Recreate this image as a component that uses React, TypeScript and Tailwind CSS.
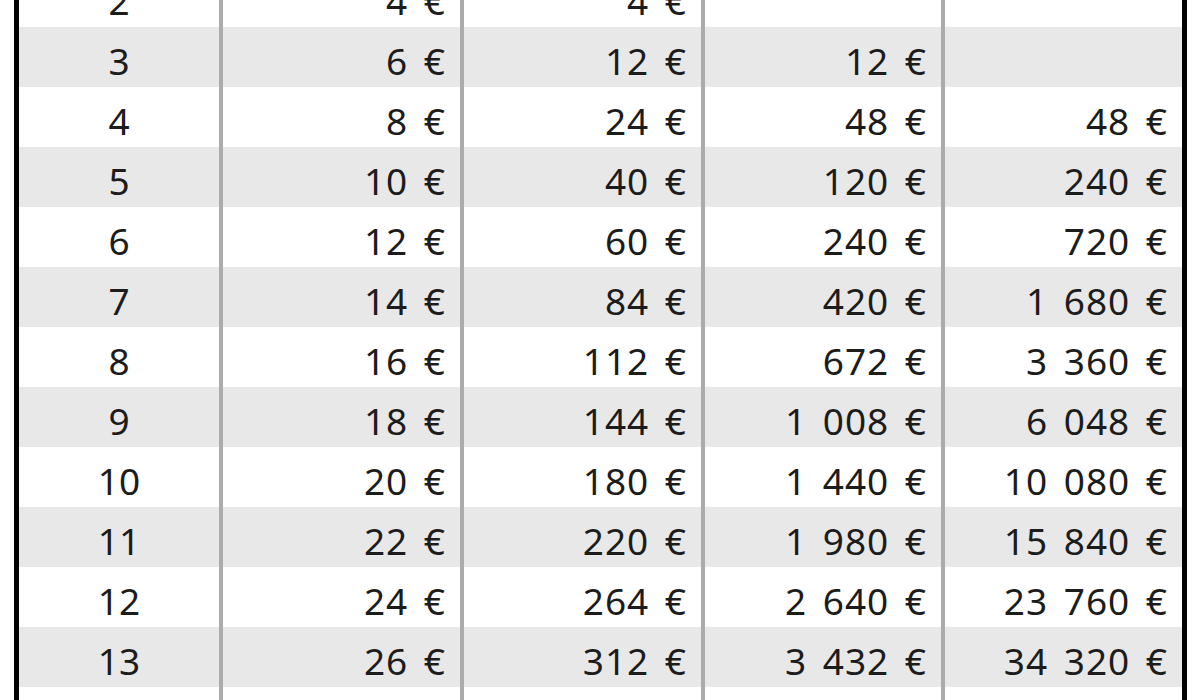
const cols = [
  (n: number) => 2 * n,
  (n: number) => 2 * n * (n - 1),
  (n: number) => 2 * n * (n - 1) * (n - 2),
  (n: number) => 2 * n * (n - 1) * (n - 2) * (n - 3),
];

const rows = Array.from({ length: 13 }, (_, i) => i + 2);

function euro(v: number) {
  if (v <= 0) return '';
  const s = v.toString().replace(/\B(?=(\d{3})+(?!\d))/g, '\u00a0');
  return `${s}\u00a0€`;
}

function App() {
  return (
    <div className="h-[700px] w-[1200px] overflow-hidden bg-white">
      <div
        className="ml-[14px] -mt-[33px] w-[1173px] border-x-[5px] border-black text-[37px] leading-none text-[#1c1c1c]"
        style={{ fontFamily: '"Noto Sans", "Open Sans", sans-serif' }}
      >
        {rows.map((n) => (
          <div
            key={n}
            className={`grid h-[60px] grid-cols-[200px_241px_241px_240px_241px] ${
              n % 2 === 1 ? 'bg-[#e8e8e8]' : 'bg-white'
            }`}
          >
            <div className="flex items-center justify-center pt-[6px]">{n}</div>
            {cols.map((f, i) => (
              <div
                key={i}
                className="flex items-center justify-end whitespace-nowrap border-l-4 border-[#ababab] pr-[14px] pt-[6px] tracking-[1px] [word-spacing:5px]"
              >
                {euro(f(n))}
              </div>
            ))}
          </div>
        ))}
      </div>
    </div>
  );
}

export default App;
